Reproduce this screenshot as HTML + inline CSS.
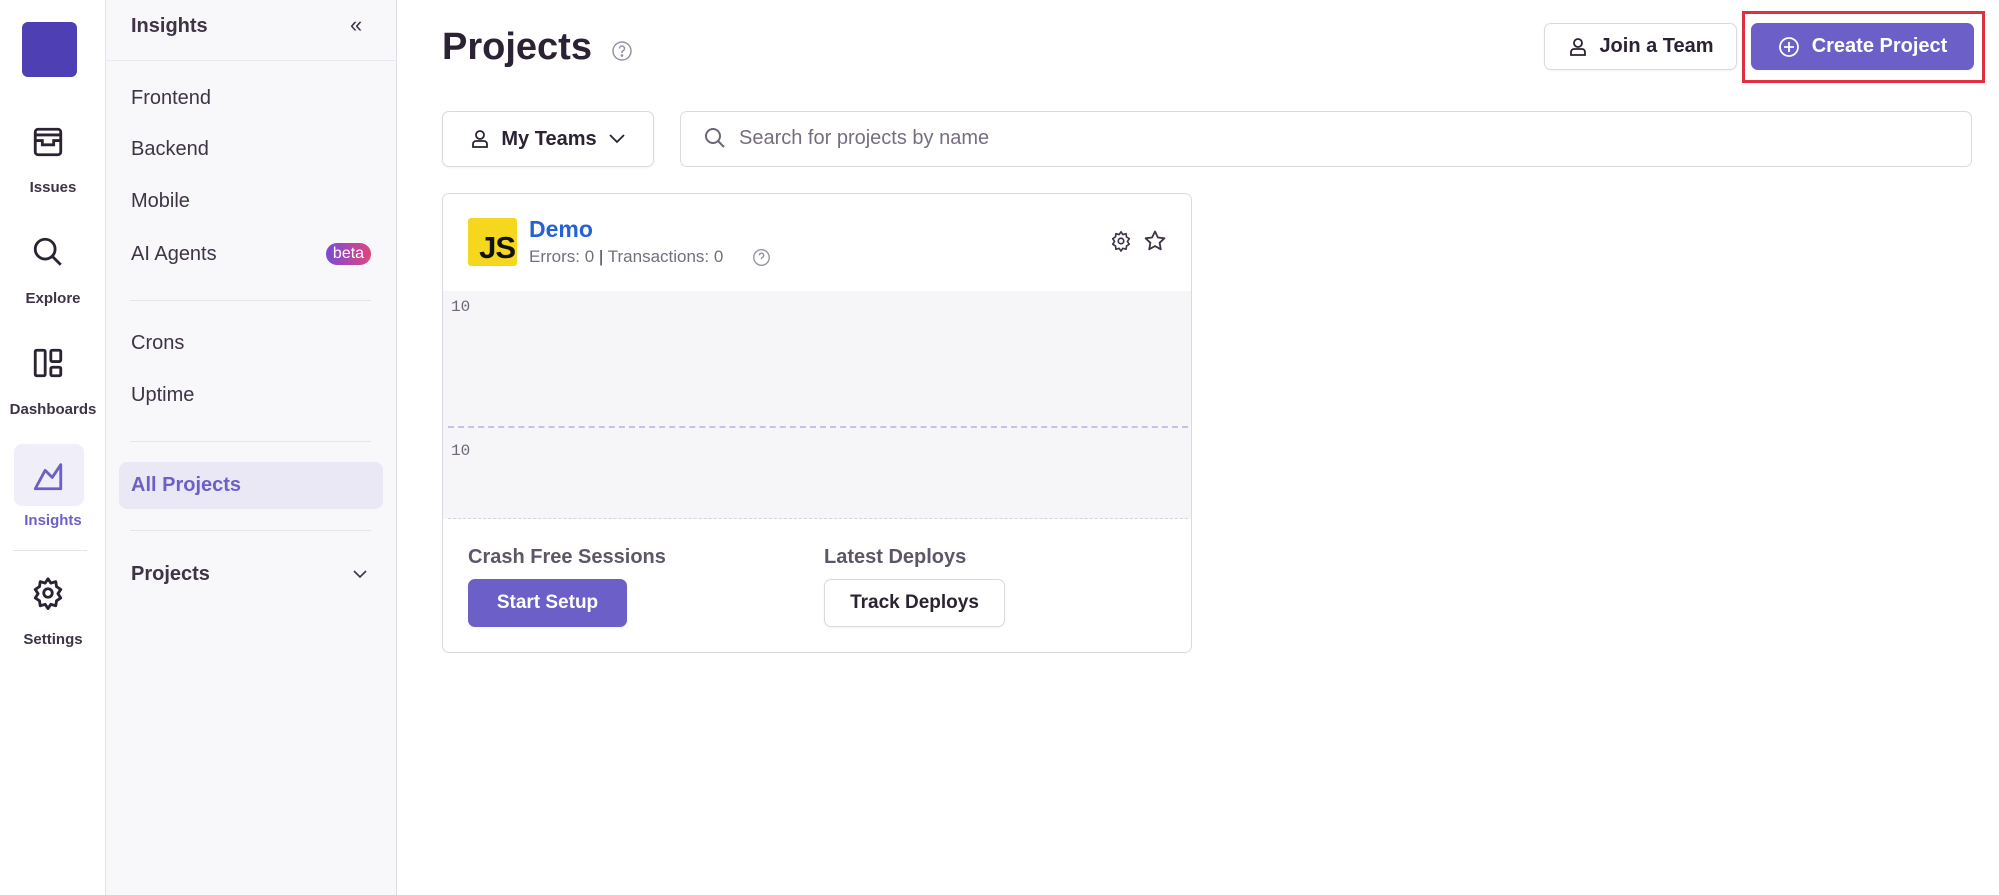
<!DOCTYPE html>
<html><head><meta charset="utf-8"><style>
*{box-sizing:border-box;margin:0;padding:0}
body{width:1999px;height:895px;position:relative;background:#fff;font-family:"Liberation Sans",sans-serif;color:#2b2233;overflow:hidden}
.a{position:absolute}
.rail{left:0;top:0;width:106px;height:895px;background:#fff;border-right:1px solid #e6e3ea}
.side{left:106px;top:0;width:291px;height:895px;background:#f8f7fa;border-right:1px solid #e0dce5}
.rl{width:106px;text-align:center;font-size:15px;font-weight:bold;color:#3e3446}
.mi{left:131px;font-size:20px;color:#3e3446;line-height:24px}
.hr{height:1px;background:#e6e3ea}
.btn{border:1px solid #dcd8e0;border-radius:7px;background:#fff;display:flex;align-items:center;justify-content:center;font-weight:bold;color:#2b2233;box-shadow:0 1px 2px rgba(0,0,0,.05)}
</style></head><body>
<div class="a rail"></div>
<div class="a" style="left:22px;top:22px;width:55px;height:55px;background:#4e3fb4;border-radius:6px"></div>
<svg class="a" style="left:31px;top:125px" width="34" height="34" viewBox="0 0 24 24" fill="none" stroke="#2b2233" stroke-width="2"><rect x="3" y="3" width="18" height="18" rx="2"/><path d="M3 7h18M3 11h5v3h8v-3h5"/></svg>
<div class="a rl" style="top:179px">Issues</div>
<svg class="a" style="left:31px;top:235px" width="34" height="34" viewBox="0 0 24 24" fill="none" stroke="#2b2233" stroke-width="2"><circle cx="10" cy="10" r="7"/><path d="M15 15l6 6"/></svg>
<div class="a rl" style="top:290px">Explore</div>
<svg class="a" style="left:31px;top:346px" width="34" height="34" viewBox="0 0 24 24" fill="none" stroke="#2b2233" stroke-width="2"><rect x="3" y="3" width="7" height="18" rx="1"/><rect x="14" y="3" width="7" height="8" rx="1"/><rect x="14" y="15" width="7" height="6" rx="1"/></svg>
<div class="a rl" style="top:401px">Dashboards</div>
<div class="a" style="left:14px;top:444px;width:70px;height:62px;background:#f0eef8;border-radius:8px"></div>
<svg class="a" style="left:31px;top:459px" width="34" height="34" viewBox="0 0 24 24" fill="none" stroke="#6c5fc7" stroke-width="2"><path d="M3 21h18V4l-6 9-5-5-7 13z" stroke-linejoin="round"/></svg>
<div class="a rl" style="top:512px;color:#6c5fc7">Insights</div>
<div class="a hr" style="left:13px;top:550px;width:74px"></div>
<svg class="a" style="left:31px;top:576px" width="34" height="34" viewBox="0 0 24 24" fill="none" stroke="#2b2233" stroke-width="2"><circle cx="12" cy="12" r="3"/><path d="M12 2l2 3 3.5-1 .5 3.5 3 2-2 3 2 3-3 2-.5 3.5-3.5-1-2 3-2-3-3.5 1-.5-3.5-3-2 2-3-2-3 3-2 .5-3.5 3.5 1z" stroke-linejoin="round"/></svg>
<div class="a rl" style="top:631px">Settings</div>

<div class="a side"></div>
<div class="a" style="left:106px;top:60px;width:291px;height:1px;background:#ebe8ef"></div>
<div class="a" style="left:131px;top:15px;font-size:20px;font-weight:bold;color:#3e3446">Insights</div>
<div class="a" style="left:350px;top:12px;font-size:22px;color:#3e3446">«</div>
<div class="a mi" style="top:86px">Frontend</div>
<div class="a mi" style="top:137px">Backend</div>
<div class="a mi" style="top:189px">Mobile</div>
<div class="a mi" style="top:242px">AI Agents</div>
<div class="a" style="left:326px;top:243px;width:45px;height:22px;border-radius:11px;background:linear-gradient(90deg,#7a4bd6,#e1457e);color:#fff;font-size:16px;text-align:center;line-height:22px">beta</div>
<div class="a hr" style="left:130px;top:300px;width:241px"></div>
<div class="a mi" style="top:331px">Crons</div>
<div class="a mi" style="top:383px">Uptime</div>
<div class="a hr" style="left:130px;top:441px;width:241px"></div>
<div class="a" style="left:119px;top:462px;width:264px;height:47px;background:#ebe8f5;border-radius:8px"></div>
<div class="a mi" style="top:473px;color:#6c5fc7;font-weight:bold">All Projects</div>
<div class="a hr" style="left:130px;top:530px;width:241px"></div>
<div class="a mi" style="top:562px;font-weight:bold">Projects</div>
<svg class="a" style="left:351px;top:567px" width="18" height="14" viewBox="0 0 18 14" fill="none" stroke="#3e3446" stroke-width="1.6"><path d="M3 4l6 6 6-6"/></svg>

<div class="a" style="left:442px;top:26px;font-size:38px;font-weight:bold;color:#2b2233">Projects</div>
<svg class="a" style="left:611px;top:40px" width="22" height="22" viewBox="0 0 22 22" fill="none" stroke="#9a92a3" stroke-width="1.5"><circle cx="11" cy="11" r="9"/><path d="M8.5 8.5a2.5 2.5 0 1 1 3.5 2.3c-.7.3-1 .8-1 1.5v.7"/><circle cx="11" cy="15.5" r=".6" fill="#9a92a3"/></svg>

<div class="a btn" style="left:1544px;top:23px;width:193px;height:47px;font-size:20px;gap:10px">
<svg width="22" height="22" viewBox="0 0 22 22" fill="none" stroke="#2b2233" stroke-width="1.8"><circle cx="11" cy="7" r="4"/><path d="M4 19v-3a3 3 0 0 1 3-3h8a3 3 0 0 1 3 3v3z"/></svg>Join a Team</div>
<div class="a" style="left:1742px;top:11px;width:243px;height:72px;border:3px solid #e0303f"></div>
<div class="a btn" style="left:1751px;top:23px;width:223px;height:47px;background:#6c5fc7;border-color:#6c5fc7;color:#fff;font-size:20px;gap:12px">
<svg width="22" height="22" viewBox="0 0 22 22" fill="none" stroke="#fff" stroke-width="1.8"><circle cx="11" cy="11" r="9"/><path d="M11 6v10M6 11h10"/></svg>Create Project</div>

<div class="a btn" style="left:442px;top:111px;width:212px;height:56px;font-size:20px;gap:10px">
<svg width="22" height="22" viewBox="0 0 22 22" fill="none" stroke="#2b2233" stroke-width="1.8"><circle cx="11" cy="7" r="4"/><path d="M4 19v-3a3 3 0 0 1 3-3h8a3 3 0 0 1 3 3v3z"/></svg>My Teams
<svg width="20" height="14" viewBox="0 0 20 14" fill="none" stroke="#2b2233" stroke-width="1.8"><path d="M3 3l7 7 7-7"/></svg></div>
<div class="a" style="left:680px;top:111px;width:1292px;height:56px;border:1px solid #dcd8e0;border-radius:7px"></div>
<svg class="a" style="left:703px;top:126px" width="24" height="24" viewBox="0 0 24 24" fill="none" stroke="#6e6577" stroke-width="2"><circle cx="10" cy="10" r="7"/><path d="M15 15l6 6"/></svg>
<div class="a" style="left:739px;top:127px;font-size:20px;color:#766e80">Search for projects by name</div>

<div class="a" style="left:442px;top:193px;width:750px;height:460px;border:1px solid #dcd8e0;border-radius:7px;overflow:hidden">
<div class="a" style="left:0;top:97px;width:750px;height:228px;background:#f6f6f9"></div>
<div class="a" style="left:5px;top:232px;width:740px;border-top:2px dashed #c7c0e8"></div>
<div class="a" style="left:5px;top:324px;width:740px;border-top:1px dashed #d8d4de"></div>
<div class="a" style="left:8px;top:104px;font-family:'Liberation Mono',monospace;font-size:16px;color:#6e6577">10</div>
<div class="a" style="left:8px;top:248px;font-family:'Liberation Mono',monospace;font-size:16px;color:#6e6577">10</div>
</div>
<div class="a" style="left:468px;top:218px;width:49px;height:48px;background:#f5d81e;border-radius:3px;font-weight:bold;font-size:31px;color:#111;text-align:right;padding:13px 2px 0 0;line-height:34px;letter-spacing:-1px">JS</div>
<div class="a" style="left:529px;top:216px;font-size:23px;font-weight:bold;color:#2562d4">Demo</div>
<div class="a" style="left:529px;top:247px;font-size:17px;color:#766e80">Errors: 0 <span style="color:#3e3446">|</span> Transactions: 0</div>
<svg class="a" style="left:752px;top:248px" width="19" height="19" viewBox="0 0 22 22" fill="none" stroke="#9a92a3" stroke-width="1.6"><circle cx="11" cy="11" r="9"/><path d="M8.5 8.5a2.5 2.5 0 1 1 3.5 2.3c-.7.3-1 .8-1 1.5v.7"/></svg>
<svg class="a" style="left:1110px;top:230px" width="22" height="22" viewBox="0 0 24 24" fill="none" stroke="#3e3446" stroke-width="1.8"><circle cx="12" cy="12" r="3"/><path d="M12 2l2 3 3.5-1 .5 3.5 3 2-2 3 2 3-3 2-.5 3.5-3.5-1-2 3-2-3-3.5 1-.5-3.5-3-2 2-3-2-3 3-2 .5-3.5 3.5 1z" stroke-linejoin="round"/></svg>
<svg class="a" style="left:1143px;top:229px" width="24" height="24" viewBox="0 0 24 24" fill="none" stroke="#3e3446" stroke-width="1.8"><path d="M12 2.5l2.9 6 6.5.8-4.8 4.5 1.2 6.5L12 17.1 6.2 20.3l1.2-6.5L2.6 9.3l6.5-.8z" stroke-linejoin="round"/></svg>
<div class="a" style="left:468px;top:546px;font-size:20px;font-weight:bold;color:#5e5668">Crash Free Sessions</div>
<div class="a" style="left:824px;top:546px;font-size:20px;font-weight:bold;color:#5e5668">Latest Deploys</div>
<div class="a btn" style="left:468px;top:579px;width:159px;height:48px;background:#6c5fc7;border-color:#6c5fc7;color:#fff;font-size:19px">Start Setup</div>
<div class="a btn" style="left:824px;top:579px;width:181px;height:48px;font-size:19px">Track Deploys</div>
</body></html>
